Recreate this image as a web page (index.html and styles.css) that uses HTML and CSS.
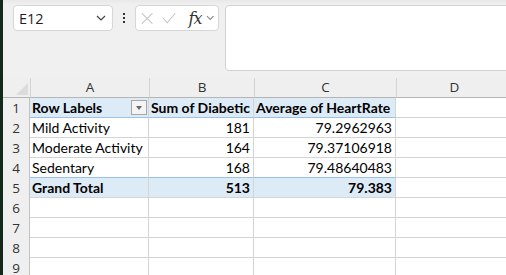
FILE: index.html
```html
<!DOCTYPE html>
<html lang="en">
<head>
    <meta charset="UTF-8">
    <meta name="viewport" content="width=device-width, initial-scale=1.0">
    <title>Pivot Table</title>
    <link rel="stylesheet" href="styles.css">
</head>
<body>
    <div class="toolbar">
        <div class="namebox">
            <span>E12</span>
            <svg class="chev" width="10" height="6" viewBox="0 0 10 6"><path d="M1 1 L5 5 L9 1" fill="none" stroke="#444" stroke-width="1.2"/></svg>
        </div>
        <div class="dots"><i></i><i></i><i></i></div>
        <div class="fxbox">
            <svg class="ic-x" width="13" height="13" viewBox="0 0 13 13"><path d="M1 1 L12 12 M12 1 L1 12" stroke="#c4c4c4" stroke-width="1.1"/></svg>
            <svg class="ic-ok" width="15" height="12" viewBox="0 0 15 12"><path d="M1 6 L5.5 11 L14 1" fill="none" stroke="#c4c4c4" stroke-width="1.1"/></svg>
            <span class="fx">fx</span>
            <svg class="chev" width="9" height="6" viewBox="0 0 9 6"><path d="M1 1 L4.5 4.5 L8 1" fill="none" stroke="#888" stroke-width="1.1"/></svg>
        </div>
        <div class="formula"></div>
    </div>

    <div class="sheet">
        <div class="corner"><span class="tri"></span></div>
        <div class="colhead">A</div>
        <div class="colhead">B</div>
        <div class="colhead">C</div>
        <div class="colhead">D</div>

        <div class="rowhead">1</div>
        <div class="cell pv-head bold">Row Labels<span class="filter"></span></div>
        <div class="cell pv-head bold">Sum of Diabetic</div>
        <div class="cell pv-head bold">Average of HeartRate</div>
        <div class="cell"></div>

        <div class="rowhead">2</div>
        <div class="cell">Mild Activity</div>
        <div class="cell num">181</div>
        <div class="cell num">79.2962963</div>
        <div class="cell"></div>

        <div class="rowhead">3</div>
        <div class="cell">Moderate Activity</div>
        <div class="cell num">164</div>
        <div class="cell num">79.37106918</div>
        <div class="cell"></div>

        <div class="rowhead">4</div>
        <div class="cell pv-last">Sedentary</div>
        <div class="cell num pv-last">168</div>
        <div class="cell num pv-last">79.48640483</div>
        <div class="cell"></div>

        <div class="rowhead">5</div>
        <div class="cell pv-total bold">Grand Total</div>
        <div class="cell pv-total bold num">513</div>
        <div class="cell pv-total bold num">79.383</div>
        <div class="cell"></div>

        <div class="rowhead">6</div>
        <div class="cell"></div><div class="cell"></div><div class="cell"></div><div class="cell"></div>
        <div class="rowhead">7</div>
        <div class="cell"></div><div class="cell"></div><div class="cell"></div><div class="cell"></div>
        <div class="rowhead">8</div>
        <div class="cell"></div><div class="cell"></div><div class="cell"></div><div class="cell"></div>
        <div class="rowhead">9</div>
        <div class="cell"></div><div class="cell"></div><div class="cell"></div><div class="cell"></div>
    </div>
</body>
</html>
```

FILE: styles.css
```css
body {
    margin: 0;
    height: 275px;
    overflow: hidden;
    background-color: #efefef;
    border-left: 3px solid #14291c;
    font-family: "Open Sans", "Noto Sans", sans-serif;
    color: #222;
}
.toolbar {
    display: flex;
    align-items: flex-start;
    height: 78px;
    padding: 5px 0 0 10px;
    box-sizing: border-box;
    background: linear-gradient(#e9e9e9 0, #f0f0f0 5px);
}
.namebox {
    width: 100px;
    height: 26px;
    box-sizing: border-box;
    background-color: #fff;
    border: 1px solid #d6d6d6;
    border-radius: 4px;
    display: flex;
    align-items: center;
    justify-content: space-between;
    padding: 0 6px 0 5px;
    font-size: 14.5px;
    color: #1f1f1f;
}
.dots {
    width: 22px;
    height: 26px;
    display: flex;
    flex-direction: column;
    align-items: center;
    justify-content: center;
    gap: 2px;
}
.dots i {
    width: 2px;
    height: 2px;
    background-color: #333;
}
.fxbox {
    width: 84px;
    height: 26px;
    box-sizing: border-box;
    background-color: #fff;
    border: 1px solid #d6d6d6;
    border-radius: 4px;
    display: flex;
    align-items: center;
    padding: 0 3px 0 5px;
}
.ic-ok {
    margin-left: 9px;
}
.fx {
    font-family: "DejaVu Serif", "Liberation Serif", serif;
    font-style: italic;
    font-size: 16px;
    color: #333;
    margin-left: 12px;
    letter-spacing: -1px;
}
.fxbox .chev {
    margin-left: 5px;
}
.formula {
    flex: 1;
    height: 66px;
    margin-left: 6px;
    margin-right: -6px;
    box-sizing: border-box;
    background-color: #fff;
    border: 1px solid #d2d2d2;
    border-radius: 4px;
}
.sheet {
    display: grid;
    grid-template-columns: 27px 119px 105px 142px 116px;
    grid-auto-rows: 20px;
}
.corner, .colhead {
    height: 20px;
    box-sizing: border-box;
    border-bottom: 1px solid #b5b5b5;
}
.corner {
    position: relative;
}
.tri {
    position: absolute;
    right: 2px;
    bottom: 2px;
    width: 0;
    height: 0;
    border-left: 12px solid transparent;
    border-bottom: 12px solid #dcdcdc;
}
.colhead {
    text-align: center;
    font-size: 13.5px;
    line-height: 19px;
    color: #333;
    border-left: 1px solid #d4d4d4;
}
.rowhead {
    text-align: center;
    font-size: 13.5px;
    line-height: 20px;
    color: #333;
    border-right: 1px solid #c2c2c2;
}
.cell {
    position: relative;
    box-sizing: border-box;
    background-color: #fff;
    border-right: 1px solid #d4d4d4;
    border-bottom: 1px solid #d4d4d4;
    font-family: Lato, "Liberation Sans", sans-serif;
    font-size: 14px;
    line-height: 19px;
    color: #000;
    padding: 0 3px 0 2px;
    white-space: nowrap;
    overflow: hidden;
}
.num {
    text-align: right;
}
.bold {
    font-weight: bold;
}
.pv-head {
    background-color: #ddebf7;
    border-bottom-color: #9bc2e6;
}
.pv-last {
    border-bottom-color: #9bc2e6;
}
.pv-total {
    background-color: #ddebf7;
}
.filter {
    position: absolute;
    right: 1px;
    top: 2px;
    width: 16px;
    height: 15px;
    box-sizing: border-box;
    border: 1px solid #a6a6a6;
    background-color: #f4f4f4;
}
.filter::after {
    content: "";
    position: absolute;
    left: 4px;
    top: 5px;
    border-left: 3.5px solid transparent;
    border-right: 3.5px solid transparent;
    border-top: 4px solid #666;
}
```
